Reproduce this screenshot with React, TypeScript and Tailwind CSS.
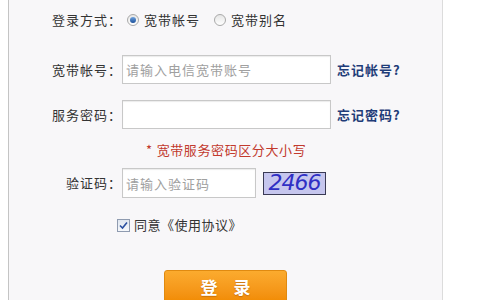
import React from "react";

const font = { fontFamily: '"Noto Sans CJK SC", "Noto Sans", sans-serif' };

function Radio({ checked }: { checked?: boolean }) {
  return (
    <span className="flex h-[12px] w-[12px] items-center justify-center rounded-full border border-[#a9a9a9] bg-gradient-to-b from-[#e6e6e6] to-white">
      {checked && (
        <span className="h-[6px] w-[6px] rounded-full bg-gradient-to-b from-[#6fa3de] to-[#1b4f9a]" />
      )}
    </span>
  );
}

function Label({ children }: { children: React.ReactNode }) {
  return (
    <div className="w-[113px] shrink-0 text-right text-[13px] tracking-[1px] text-[#333]">
      {children}
    </div>
  );
}

export default function App() {
  return (
    <div className="h-[300px] w-[480px] overflow-hidden bg-white" style={font}>
      <div className="ml-[8px] h-[300px] w-[435px] border-l border-r border-l-[#c4c4c4] border-r-[#dcdcdc] bg-[#f8f7f9]">
        {/* 登录方式 */}
        <div className="flex h-[40px] items-center">
          <Label>登录方式：</Label>
          <div className="ml-[5px] flex items-center gap-[5px]">
            <Radio checked />
            <span className="text-[13px] tracking-[1px] text-[#333]">宽带帐号</span>
          </div>
          <div className="ml-[14px] flex items-center gap-[5px]">
            <Radio />
            <span className="text-[13px] tracking-[1px] text-[#333]">宽带别名</span>
          </div>
        </div>

        {/* 宽带帐号 */}
        <div className="mt-[15px] flex h-[29px] items-center">
          <Label>宽带帐号：</Label>
          <input
            className="h-[29px] w-[209px] border border-[#c8c8c8] bg-white px-[3px] text-[13px] tracking-[1px] shadow-[inset_0_1px_1px_rgba(0,0,0,0.08)] outline-none placeholder:text-[#a0a0a0]"
            placeholder="请输入电信宽带账号"
          />
          <a className="ml-[6px] text-[13px] font-bold tracking-[1px] text-[#1f3c78]">忘记帐号?</a>
        </div>

        {/* 服务密码 */}
        <div className="mt-[16px] flex h-[29px] items-center">
          <Label>服务密码：</Label>
          <input
            type="password"
            className="h-[29px] w-[209px] border border-[#c8c8c8] bg-white px-[3px] text-[13px] shadow-[inset_0_1px_1px_rgba(0,0,0,0.08)] outline-none"
          />
          <a className="ml-[6px] text-[13px] font-bold tracking-[1px] text-[#1f3c78]">忘记密码?</a>
        </div>

        {/* 提示 */}
        <div className="mt-[11px] flex h-[20px] items-center pl-[137px] text-[13px] tracking-[0.6px] text-[#c23a2e]">
          <span className="mr-[4px]">*</span>
          <span>宽带服务密码区分大小写</span>
        </div>

        {/* 验证码 */}
        <div className="mt-[8px] flex h-[30px] items-center">
          <Label>验证码：</Label>
          <input
            className="h-[30px] w-[134px] border border-[#c8c8c8] bg-white px-[3px] text-[13px] tracking-[1px] shadow-[inset_0_1px_1px_rgba(0,0,0,0.08)] outline-none placeholder:text-[#a0a0a0]"
            placeholder="请输入验证码"
          />
          <div
            className="ml-[7px] flex h-[23px] w-[63px] items-center justify-center border border-[#3a3a55] bg-[#c6c6ee] text-[22px] italic leading-none tracking-[-1px] text-[#2f2fc4]"
            style={{ fontFamily: '"DejaVu Sans", sans-serif' }}
          >
            2466
          </div>
        </div>

        {/* 同意 */}
        <div className="mt-[17px] flex h-[20px] items-center pl-[108px]">
          <span className="flex h-[13px] w-[13px] items-center justify-center border border-[#8f9bb0] bg-gradient-to-b from-[#dfe6f0] to-[#f6f8fb]">
            <svg width="9" height="9" viewBox="0 0 9 9">
              <path d="M1 4.5 L3.5 7 L8 1.5" fill="none" stroke="#2a4fa0" strokeWidth="1.6" />
            </svg>
          </span>
          <span className="ml-[4px] text-[13px] tracking-[0.5px] text-[#333]">同意《使用协议》</span>
        </div>

        {/* 登录按钮 */}
        <div className="mt-[35px] pl-[155px]">
          <button className="flex h-[34px] w-[123px] items-center justify-center gap-[16px] rounded-[3px] border border-[#e08a10] bg-gradient-to-b from-[#fbab2e] to-[#f18a00] text-[17px] font-bold text-white [text-shadow:0_1px_1px_rgba(160,80,0,0.5)]">
            <span>登</span>
            <span>录</span>
          </button>
        </div>
      </div>
    </div>
  );
}
